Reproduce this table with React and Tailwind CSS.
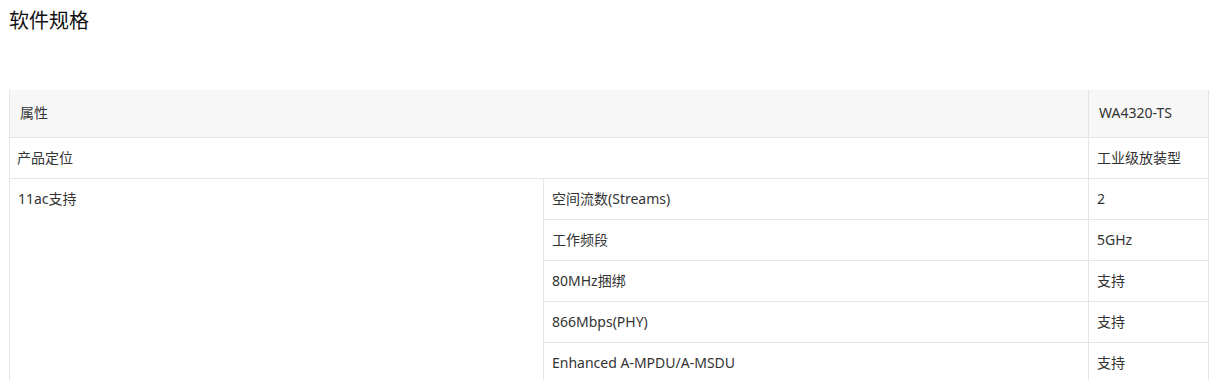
const rows = [
  ['空间流数(Streams)', '2'],
  ['工作频段', '5GHz'],
  ['80MHz捆绑', '支持'],
  ['866Mbps(PHY)', '支持'],
  ['Enhanced A-MPDU/A-MSDU', '支持'],
];

function App() {
  return (
    <div
      className="w-[1216px] h-[380px] overflow-hidden bg-white text-[#333]"
      style={{ fontFamily: '"Noto Sans", "Noto Sans CJK SC", sans-serif' }}
    >
      <h2
        className="pl-[9px] pt-[6px] text-[20px] leading-[28px] font-normal text-[#111]"
        style={{ fontFamily: '"Noto Sans CJK SC", sans-serif' }}
      >
        软件规格
      </h2>

      <table className="ml-[9px] mt-[56px] w-[1200px] border-collapse text-[14px] leading-[20px] table-fixed">
        <colgroup>
          <col className="w-[534px]" />
          <col className="w-[545px]" />
          <col />
        </colgroup>
        <tbody>
          <tr className="bg-[#f7f7f7]">
            <td colSpan={2} className="border-x border-b border-[#e5e5e5] pl-[10px] pt-[13px] pb-[14px]">属性</td>
            <td className="border-x border-b border-[#e5e5e5] pl-[10px] pt-[13px] pb-[14px]">WA4320-TS</td>
          </tr>
          <tr>
            <td colSpan={2} className="border border-[#e5e5e5] pl-[7px] py-[10px]">产品定位</td>
            <td className="border border-[#e5e5e5] pl-[8px] py-[10px]">工业级放装型</td>
          </tr>
          {rows.map(([name, value], i) => (
            <tr key={name}>
              {i === 0 && (
                <td rowSpan={rows.length} className="border border-[#e5e5e5] pl-[8px] py-[10px] align-top">
                  11ac支持
                </td>
              )}
              <td className="border border-[#e5e5e5] pl-[8px] py-[10px]">{name}</td>
              <td className="border border-[#e5e5e5] pl-[8px] py-[10px]">{value}</td>
            </tr>
          ))}
        </tbody>
      </table>
    </div>
  );
}

export default App;
